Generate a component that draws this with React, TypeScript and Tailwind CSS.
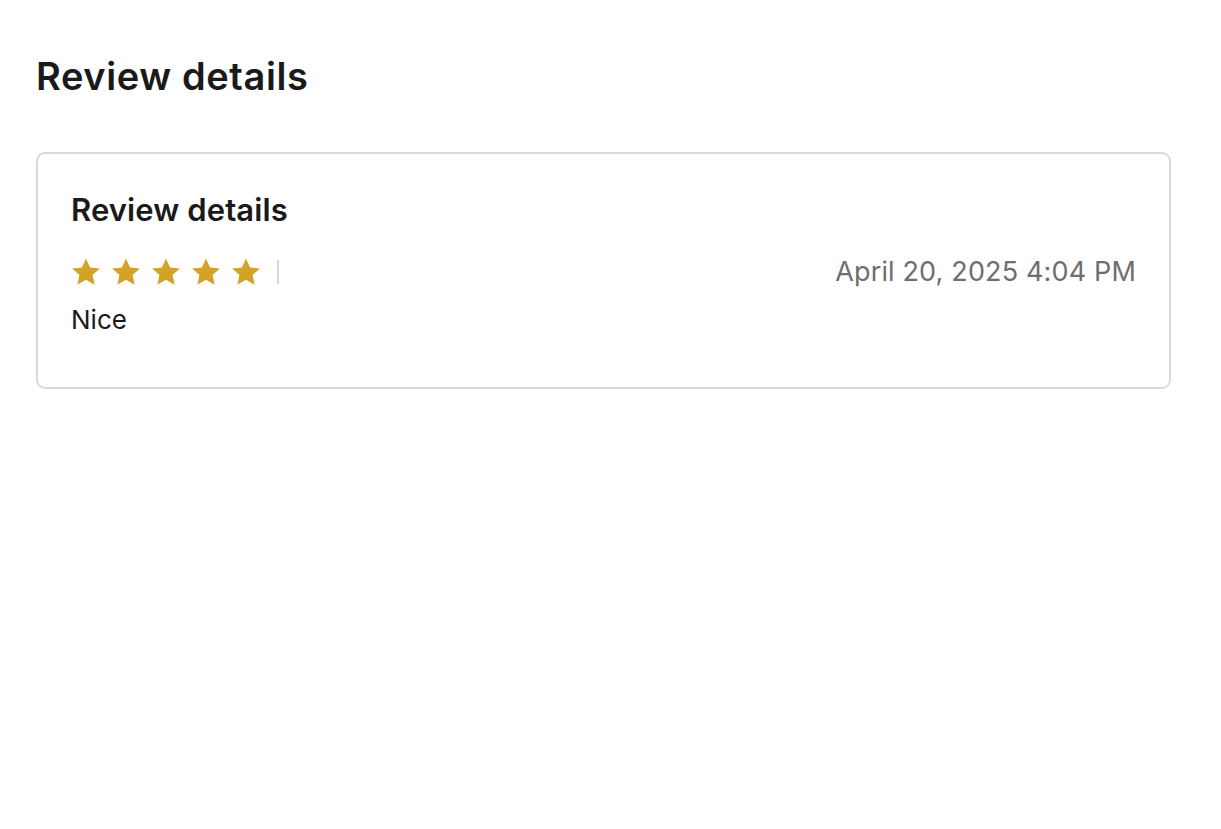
const stars = [0, 1, 2, 3, 4];

function Star() {
  return (
    <svg width="32" height="32" viewBox="0 0 20 20" aria-hidden="true" className="-m-px">
      <path
        fill="#d4a326"
        d="M10 1.6l2.55 5.6 6.1.62-4.57 4.1 1.3 6.03L10 14.87l-5.38 3.08 1.3-6.03L1.35 7.82l6.1-.62z"
      />
    </svg>
  );
}

export default function App() {
  return (
    <div
      className="min-h-screen bg-white pl-[36px] pr-[50px] pt-[52px] text-[#1a1a1a]"
      style={{ fontFamily: "Inter, 'Noto Sans', sans-serif" }}
    >
      <h1 className="text-[38px] font-semibold leading-[48px] tracking-[0.6px]">Review details</h1>

      <div className="mt-[52px] rounded-[9px] border-2 border-[#d9d9d9] px-[33px] pt-[34px] pb-[49px]">
        <h2 className="text-[31px] font-semibold leading-[44px] tracking-[0.1px]">Review details</h2>

        <div className="mt-[22px] flex items-center justify-between">
          <div className="flex items-center">
            <div className="flex items-center gap-[10px]">
              {stars.map((i) => (
                <Star key={i} />
              ))}
            </div>
            <span className="ml-[16px] h-[24px] w-[2px] bg-[#d6d6d6]" />
          </div>
          <span className="text-[27px] leading-[36px] tracking-[0.15px] text-[#6e6e6e]">April 20, 2025 4:04 PM</span>
        </div>

        <p className="mt-[12px] text-[26px] leading-[36px]">Nice</p>
      </div>
    </div>
  );
}
